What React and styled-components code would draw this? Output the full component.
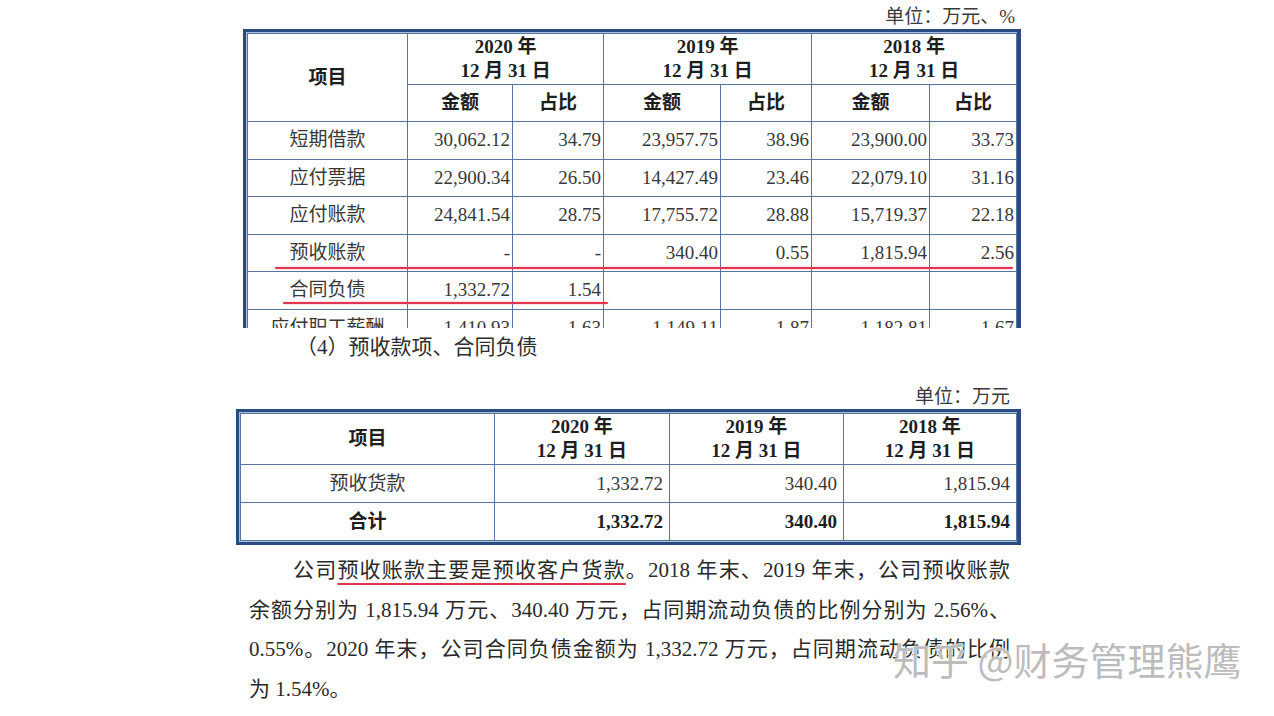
import React from 'react'
import styled, { createGlobalStyle, css } from 'styled-components'

const GlobalStyle = createGlobalStyle`
  html, body {
    margin: 0;
    padding: 0;
    background: #fff;
  }
  body {
    font-family: "Liberation Serif", "Noto Sans CJK SC", serif;
    color: #333;
  }
`

const Page = styled.div`
  position: relative;
  width: 1274px;
  height: 716px;
  overflow: hidden;
  background: #fff;
`

const Doc = styled.div`
  margin-left: 236px;
  width: 786px;
  display: flex;
  flex-direction: column;
`

const Unit = styled.div`
  align-self: flex-end;
  margin-right: ${p => p.$right}px;
  margin-top: ${p => p.$top}px;
  height: 25px;
  line-height: 25px;
  font-size: 19px;
  color: #3a3a3a;
`

const Frame = styled.div`
  box-sizing: border-box;
  margin-left: ${p => p.$left}px;
  width: ${p => p.$width}px;
  border: 3px solid #2a4b80;
  border-right-width: 4px;
  padding: 1px;
  background: #a9bfe0;
  ${p => p.$clip && css`
    position: relative;
    height: 299px;
    overflow: hidden;
    border-bottom: none;
    padding-bottom: 0;
  `}
`

const Grid = styled.table`
  width: 100%;
  border-collapse: collapse;
  table-layout: fixed;
  background: #fff;
  border: 1px solid #3b5b8e;
`

const Row = styled.tr`
  height: ${p => p.$h}px;
`

const Cell = styled.td`
  border: 1px solid #5a74a0;
  padding: 0 ${p => (p.$pad != null ? p.$pad : 3)}px 0 3px;
  text-align: ${p => p.$align || 'center'};
  vertical-align: middle;
  font-size: 19px;
  line-height: 24px;
  font-weight: ${p => (p.$bold ? 700 : 400)};
  color: ${p => (p.$bold ? '#1e1e1e' : '#383838')};
  white-space: nowrap;
  overflow: hidden;
`

const Mark = styled.div`
  position: absolute;
  left: ${p => p.$x}px;
  top: ${p => p.$y}px;
  width: ${p => p.$w}px;
  height: 2px;
  background: #e0364f;
  box-shadow: 0 0 2px rgba(230, 60, 90, 0.55);
  border-radius: 1px;
`

const Heading = styled.div`
  margin-left: 60px;
  height: 38px;
  line-height: 38px;
  font-size: 21px;
  color: #2e2e2e;
`

const Para = styled.div`
  margin: 6px 0 0 13px;
  width: 761px;
  font-size: 21px;
  line-height: 39.7px;
  color: #2a2a2a;
`

const Line = styled.div`
  text-align: justify;
  text-align-last: ${p => (p.$last ? 'left' : 'justify')};
  padding-left: ${p => (p.$indent ? 44 : 0)}px;
`

const Underlined = styled.span`
  text-decoration: underline;
  text-decoration-color: #e0364f;
  text-decoration-thickness: 2px;
  text-underline-offset: 6px;
`

const Watermark = styled.div`
  position: absolute;
  left: 893px;
  top: 634px;
  font-family: "Noto Sans CJK SC", "Noto Sans", sans-serif;
  font-size: 38px;
  line-height: 50px;
  white-space: nowrap;
  color: rgba(170, 170, 170, 0.8);
  text-shadow: 0 0 2px #fff, 0 0 2px #fff, 0 0 1px #fff;
`

const topCols = [160, 105, 91, 117, 91, 118, 87]
const years = ['2020', '2019', '2018']

const topRows = [
  ['短期借款', '30,062.12', '34.79', '23,957.75', '38.96', '23,900.00', '33.73'],
  ['应付票据', '22,900.34', '26.50', '14,427.49', '23.46', '22,079.10', '31.16'],
  ['应付账款', '24,841.54', '28.75', '17,755.72', '28.88', '15,719.37', '22.18'],
  ['预收账款', '-', '-', '340.40', '0.55', '1,815.94', '2.56'],
  ['合同负债', '1,332.72', '1.54', '', '', '', ''],
  ['应付职工薪酬', '1,410.93', '1.63', '1,149.11', '1.87', '1,182.81', '1.67'],
]

const bottomCols = [254, 175, 174, 173]

const YearHead = ({ year }) => (
  <>
    {year} 年<br />12 月 31 日
  </>
)

function BalanceTable () {
  return (
    <Frame $left={7} $width={778} $clip>
      <Grid>
        <colgroup>
          {topCols.map((w, i) => <col key={i} style={{ width: w }} />)}
        </colgroup>
        <tbody>
          <Row $h={51}>
            <Cell rowSpan={2} $bold>项目</Cell>
            {years.map(y => (
              <Cell key={y} colSpan={2} $bold><YearHead year={y} /></Cell>
            ))}
          </Row>
          <Row $h={37}>
            {years.map(y => (
              <React.Fragment key={y}>
                <Cell $bold>金额</Cell>
                <Cell $bold>占比</Cell>
              </React.Fragment>
            ))}
          </Row>
          {topRows.map(r => (
            <Row key={r[0]} $h={37.5}>
              <Cell>{r[0]}</Cell>
              {r.slice(1).map((v, i) => (
                <Cell key={i} $align='right' $pad={2}>{v}</Cell>
              ))}
            </Row>
          ))}
        </tbody>
      </Grid>
      <Mark $x={29} $y={235} $w={738} />
      <Mark $x={37} $y={270} $w={325} />
    </Frame>
  )
}

function AdvanceTable () {
  return (
    <Frame $left={0} $width={785}>
      <Grid>
        <colgroup>
          {bottomCols.map((w, i) => <col key={i} style={{ width: w }} />)}
        </colgroup>
        <tbody>
          <Row $h={51}>
            <Cell $bold>项目</Cell>
            {years.map(y => <Cell key={y} $bold><YearHead year={y} /></Cell>)}
          </Row>
          <Row $h={38}>
            <Cell>预收货款</Cell>
            <Cell $align='right' $pad={6}>1,332.72</Cell>
            <Cell $align='right' $pad={6}>340.40</Cell>
            <Cell $align='right' $pad={6}>1,815.94</Cell>
          </Row>
          <Row $h={38}>
            <Cell $bold>合计</Cell>
            <Cell $bold $align='right' $pad={6}>1,332.72</Cell>
            <Cell $bold $align='right' $pad={6}>340.40</Cell>
            <Cell $bold $align='right' $pad={6}>1,815.94</Cell>
          </Row>
        </tbody>
      </Grid>
    </Frame>
  )
}

export default function App () {
  return (
    <Page>
      <GlobalStyle />
      <Doc>
        <Unit $right={7} $top={4}>单位：万元、%</Unit>
        <BalanceTable />
        <Heading>（4）预收款项、合同负债</Heading>
        <Unit $right={12} $top={18}>单位：万元</Unit>
        <AdvanceTable />
        <Para>
          <Line $indent>
            公司<Underlined>预收账款主要是预收客户货款</Underlined>。2018 年末、2019 年末，公司预收账款
          </Line>
          <Line>余额分别为 1,815.94 万元、340.40 万元，占同期流动负债的比例分别为 2.56%、</Line>
          <Line>0.55%。2020 年末，公司合同负债金额为 1,332.72 万元，占同期流动负债的比例</Line>
          <Line $last>为 1.54%。</Line>
        </Para>
      </Doc>
      <Watermark>知乎 @财务管理熊鹰</Watermark>
    </Page>
  )
}
